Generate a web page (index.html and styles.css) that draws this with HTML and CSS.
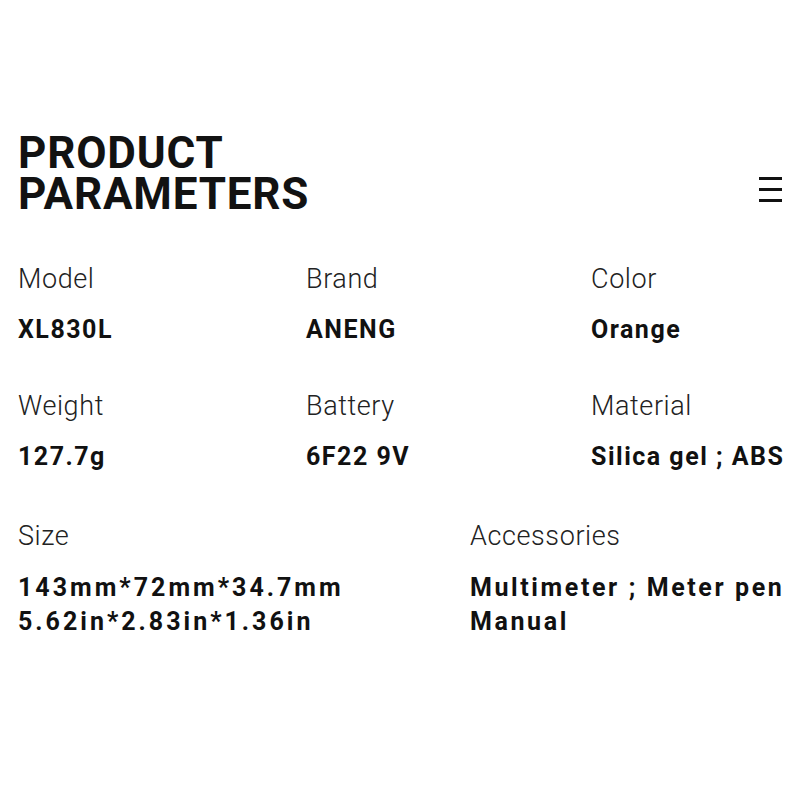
FILE: index.html
```html
<!DOCTYPE html>
<html lang="en">
<head>
<meta charset="utf-8">
<title>Product Parameters</title>
<link rel="stylesheet" href="styles.css">
</head>
<body>
<main class="page">
  <header class="header">
    <h1 class="title">
      <span class="title-line">PRODUCT</span>
      <span class="title-line">PARAMETERS</span>
    </h1>
    <button class="menu" aria-label="Menu">
      <span class="bar"></span><span class="bar"></span><span class="bar"></span>
    </button>
  </header>
  <section class="grid three">
    <div class="item">
      <div class="label">Model</div>
      <div class="value">XL830L</div>
    </div>
    <div class="item">
      <div class="label">Brand</div>
      <div class="value">ANENG</div>
    </div>
    <div class="item">
      <div class="label">Color</div>
      <div class="value">Orange</div>
    </div>
    <div class="item">
      <div class="label">Weight</div>
      <div class="value">127.7g</div>
    </div>
    <div class="item">
      <div class="label">Battery</div>
      <div class="value">6F22 9V</div>
    </div>
    <div class="item">
      <div class="label">Material</div>
      <div class="value">Silica gel ; ABS</div>
    </div>
  </section>
  <section class="grid two">
    <div class="item size">
      <div class="label">Size</div>
      <div class="value">143mm*72mm*34.7mm<br>5.62in*2.83in*1.36in</div>
    </div>
    <div class="item accessories">
      <div class="label">Accessories</div>
      <div class="value">Multimeter ; Meter pen<br>Manual</div>
    </div>
  </section>
</main>
</body>
</html>
```
FILE: styles.css
```css
* { box-sizing: border-box; }
html, body {
  margin: 0;
  padding: 0;
  background: #ffffff;
}
body {
  font-family: Roboto, "Liberation Sans", Arial, sans-serif;
  color: #111111;
}
.page {
  width: 800px;
  height: 800px;
  padding: 133px 18px 0 18px;
  overflow: hidden;
}
.header {
  display: flex;
  justify-content: space-between;
  align-items: flex-end;
}
.title {
  margin: 0;
  font-size: 44px;
  font-weight: 700;
  letter-spacing: 0.8px;
  color: #121212;
}
.title-line {
  display: block;
  line-height: 41px;
}
.menu {
  display: flex;
  flex-direction: column;
  gap: 8px;
  width: 23px;
  padding: 0;
  margin: 0 0 13px 0;
  border: 0;
  background: none;
}
.bar {
  display: block;
  width: 23px;
  height: 3px;
  background: #111111;
}
.grid {
  display: grid;
  row-gap: 45px;
}
.three {
  margin-top: 49px;
  grid-template-columns: 288px 285px 1fr;
}
.two {
  margin-top: 48px;
  grid-template-columns: 452px 1fr;
}
.item {
  display: flex;
  flex-direction: column;
  gap: 20px;
  white-space: nowrap;
}
.label {
  font-size: 27px;
  line-height: 30px;
  font-weight: 300;
  color: #222222;
  letter-spacing: 0.6px;
}
.value {
  font-size: 25px;
  line-height: 32px;
  font-weight: 700;
  color: #111111;
  letter-spacing: 1.5px;
}
.two .value {
  line-height: 34px;
}
.size .value {
  letter-spacing: 3px;
}
.accessories .value {
  letter-spacing: 2.6px;
}
```
